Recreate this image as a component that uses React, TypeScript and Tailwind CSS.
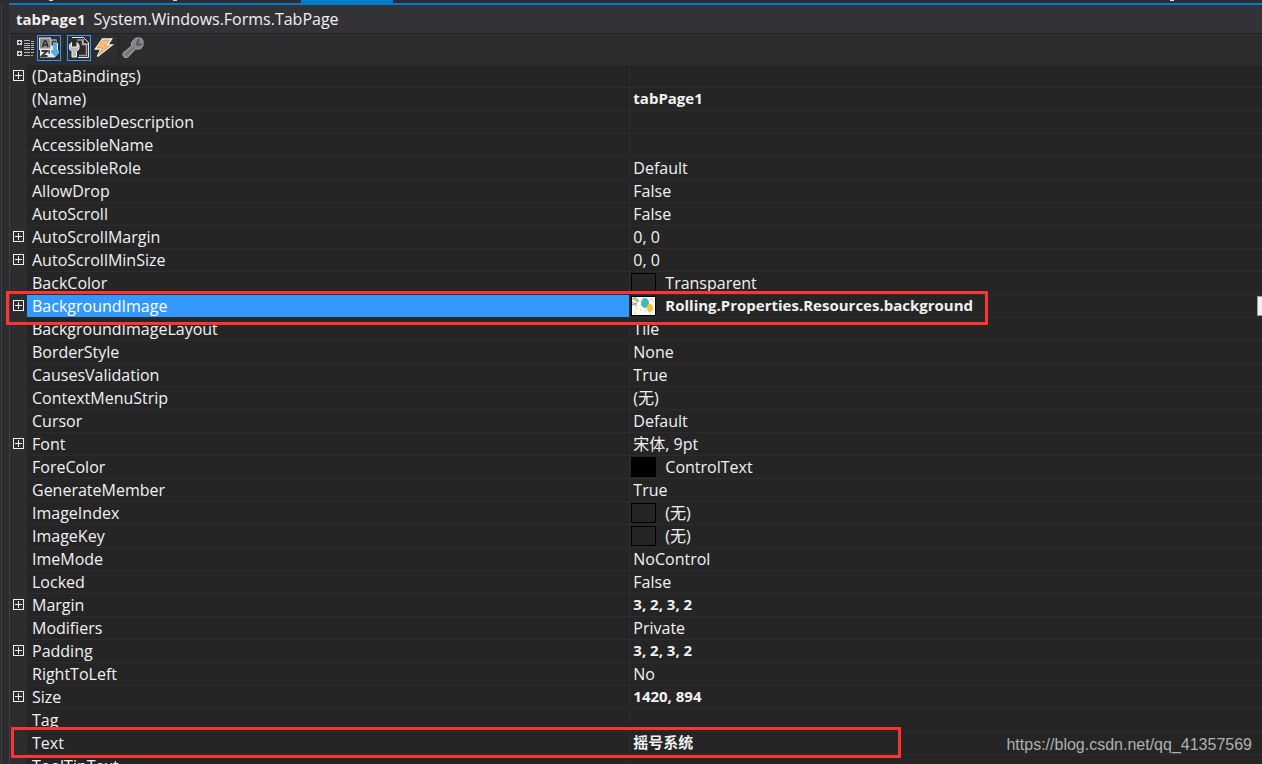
import { useState } from "react";

type Prop = {
  name: string;
  value?: string;
  bold?: boolean;
  expandable?: boolean;
  swatch?: "empty" | "black" | "image";
};

const properties: Prop[] = [
  { name: "(DataBindings)", expandable: true },
  { name: "(Name)", value: "tabPage1", bold: true },
  { name: "AccessibleDescription" },
  { name: "AccessibleName" },
  { name: "AccessibleRole", value: "Default" },
  { name: "AllowDrop", value: "False" },
  { name: "AutoScroll", value: "False" },
  { name: "AutoScrollMargin", value: "0, 0", expandable: true },
  { name: "AutoScrollMinSize", value: "0, 0", expandable: true },
  { name: "BackColor", value: "Transparent", swatch: "empty" },
  { name: "BackgroundImage", value: "Rolling.Properties.Resources.background", bold: true, expandable: true, swatch: "image" },
  { name: "BackgroundImageLayout", value: "Tile" },
  { name: "BorderStyle", value: "None" },
  { name: "CausesValidation", value: "True" },
  { name: "ContextMenuStrip", value: "(无)" },
  { name: "Cursor", value: "Default" },
  { name: "Font", value: "宋体, 9pt", expandable: true },
  { name: "ForeColor", value: "ControlText", swatch: "black" },
  { name: "GenerateMember", value: "True" },
  { name: "ImageIndex", value: "(无)", swatch: "empty" },
  { name: "ImageKey", value: "(无)", swatch: "empty" },
  { name: "ImeMode", value: "NoControl" },
  { name: "Locked", value: "False" },
  { name: "Margin", value: "3, 2, 3, 2", bold: true, expandable: true },
  { name: "Modifiers", value: "Private" },
  { name: "Padding", value: "3, 2, 3, 2", bold: true, expandable: true },
  { name: "RightToLeft", value: "No" },
  { name: "Size", value: "1420, 894", bold: true, expandable: true },
  { name: "Tag" },
  { name: "Text", value: "摇号系统", bold: true },
  { name: "ToolTipText" },
];

function CategoryIcon() {
  return (
    <svg width="24" height="26" shapeRendering="crispEdges">
      <path d="M4 5h5v5h-5zM4 16h5v5h-5z" fill="#d8d8d8" />
      <path d="M6 6h1v3h-1zM5 7h3v1h-3zM6 17h1v3h-1zM5 18h3v1h-3z" fill="#2d2d30" />
      <path d="M11 5h6v1h-6zM11 8h6v1h-6zM11 10h6v1h-6zM11 12h6v1h-6zM11 14h6v1h-6zM11 17h6v1h-6zM11 20h6v1h-6z" fill="#b5b5b5" />
      <path d="M18 6h3v1h-3zM18 8h3v1h-3zM18 10h3v1h-3zM18 12h3v1h-3zM18 14h3v1h-3zM18 17h3v1h-3zM18 20h2v1h-2z" fill="#b5b5b5" />
    </svg>
  );
}

function SortIcon() {
  return (
    <svg width="22" height="24">
      <path d="M1 1.500h12v2h5.500V7h1.500v7.500h1V17l-4.500 4.500H2V14H1z" fill="#e8e8e8" />
      <path d="M2 2.500h10.500v10H2z" fill="#8c8c8c" />
      <path d="M4.500 11L6.500 5h1.500L10 11M5.500 9h3.500" fill="none" stroke="#2b2b2b" strokeWidth="1.500" />
      <path d="M3.500 15h5.500l-5 5h5.500" fill="none" stroke="#3a3a3a" strokeWidth="2" />
      <path d="M13.500 4.500H18v2h-3v3h-1.500zM10.500 14.500h1.500v3h-1.500z" fill="#333337" />
      <path d="M15.500 7h3v7.500h2v2l-3.500 3.500-3.500-3.500v-2h2z" fill="#4db1f2" stroke="#2f8fd4" strokeWidth="0.500" />
    </svg>
  );
}

function PropertiesIcon() {
  return (
    <svg width="22" height="24">
      <path d="M4 1.500h11.500l5 5V21.500H10" fill="#2b2b2b" stroke="#e6e6e6" />
      <path d="M9 4h5.500v4.500h4V19.500H11" fill="none" stroke="#9a9a9a" strokeWidth="1.500" />
      <path d="M15 3v5h5" fill="none" stroke="#cfcfcf" />
      <path d="M3.500 6.500L1.500 9v4l2.500 2.500V21h4.500v-5.500L11 13V9L9 6.500v4.500H7L5.500 11H3.500z" fill="#b8b8b8" stroke="#f0f0f0" />
    </svg>
  );
}

function EventsIcon() {
  return (
    <svg width="24" height="26">
      <path d="M11.500 4h9l-4 6h4.500L6.500 21.500 10 14H4.500z" fill="#f9f4ec" stroke="#f9f4ec" strokeWidth="1.500" />
      <path d="M12 5h6.500l-4.500 6h4.500L8 19.500 11.500 13H6z" fill="#f7bd79" stroke="#c98a4b" strokeWidth="0.700" />
    </svg>
  );
}

function WrenchIcon() {
  return (
    <svg width="24" height="26">
      <path
        d="M13 4.500L15 3h5l2 2.500v5L19.500 14h-5L6.500 22.500h-3L2 20.500V18l8.500-7V7.500z"
        fill="#858585"
        stroke="#a3a3a3"
      />
      <path d="M14.500 7l2.500-3.500h3l-1.500 3 .5 2 3-1v2.500l-3 1.500h-3l-1.500-2z" fill="#5f5f5f" stroke="#929292" strokeWidth="0.700" />
      <path d="M4.500 20L13 12.500" stroke="#727272" strokeWidth="1.500" />
    </svg>
  );
}

function ResourceThumb() {
  return (
    <svg width="23" height="18" className="bg-white">
      <path d="M0 1l6 4M0 5l5 4" stroke="#f0a04b" strokeWidth="1.500" />
      <path d="M2 0l5 4M0 8l5-2" stroke="#5fbcc4" strokeWidth="1.500" />
      <path d="M3 14l3-3M8 9l2-3M2 17l2-2" stroke="#f3d08b" />
      <ellipse cx="13" cy="6" rx="4" ry="5" fill="#45b8b9" />
      <ellipse cx="18" cy="11" rx="3" ry="4" fill="#f8c53a" />
      <path d="M13 11v5M18 15v3" stroke="#c5e3e0" />
      <path d="M18 2h2M20 4h1M8 13h1" stroke="#f1a27b" />
    </svg>
  );
}

function Swatch({ kind }: { kind: "empty" | "black" | "image" }) {
  return (
    <span className={`block h-5 w-[25px] shrink-0 border border-black ${kind === "black" ? "bg-black" : "bg-[#252526]"}`}>
      {kind === "image" && <ResourceThumb />}
    </span>
  );
}

export default function App() {
  const [selected, setSelected] = useState("BackgroundImage");
  const [sorted, setSorted] = useState(true);

  return (
    <div className="relative flex h-screen flex-col overflow-hidden bg-[#2d2d30] font-['Open_Sans','Noto_Sans_CJK_SC',sans-serif] text-[16px] leading-[22px] text-[#f1f1f1]">
      {/* bottom edge of the document tabs */}
      <div className="ml-[9px] flex h-[3px] shrink-0 items-start">
        <div className="flex w-[292px] gap-[120px] pl-10">
          <span className="h-px w-1 bg-[#d0d0d0]" />
          <span className="h-px w-1 bg-[#d0d0d0]" />
        </div>
        <div className="h-full w-[92px] bg-[#007acc]" />
        <div className="flex flex-1 justify-end pr-[88px]">
          <span className="h-px w-1 bg-[#e6e6e6]" />
        </div>
      </div>

      <div className="flex flex-1">
        <div className="flex w-[9px] shrink-0 pl-px">
          <span className="w-px bg-[#3f3f46]" />
        </div>

        <main className="min-w-0 flex-1 border-t-2 border-[#007acc]">
          <header className="flex h-7 items-center gap-2 bg-[#333337] pl-[7px]">
            <h1 className="text-[15px] font-bold">tabPage1</h1>
            <span>System.Windows.Forms.TabPage</span>
          </header>

          <div role="toolbar" className="flex h-8 items-start border-t border-l border-t-[#222224] border-l-[#3f3f46] pt-px pl-[3px]">
            <button aria-label="Categorized" onClick={() => setSorted(false)}>
              <CategoryIcon />
            </button>
            <button
              aria-label="Alphabetical"
              onClick={() => setSorted(true)}
              className={`border ${sorted ? "border-[#3399ff]" : "border-transparent"}`}
            >
              <SortIcon />
            </button>
            <span className="ml-[3px] mr-0.5 h-[26px] w-px bg-[#222224]" />
            <button aria-label="Properties" className="border border-[#3399ff]">
              <PropertiesIcon />
            </button>
            <button aria-label="Events">
              <EventsIcon />
            </button>
            <span className="ml-[3px] mr-0.5 h-[26px] w-px bg-[#222224]" />
            <button aria-label="Property Pages">
              <WrenchIcon />
            </button>
          </div>

          <table className="w-full table-fixed border-collapse bg-[#252526]">
            <colgroup>
              <col className="w-[18px]" />
              <col className="w-[48.15%]" />
              <col />
            </colgroup>
            <tbody>
              {properties.map((p) => {
                const active = p.name === selected;
                return (
                  <tr key={p.name} className="h-[23px]" onClick={() => setSelected(p.name)}>
                    <td className="bg-[#2d2d30] p-0">
                      <div className="flex h-[23px] border-l border-[#3f3f46] pt-[5px] pl-[3px]">
                        {p.expandable && (
                          <button aria-label={`Expand ${p.name}`} className="size-[11px]">
                            <svg width="11" height="11" shapeRendering="crispEdges">
                              <path d="M0 0h11v11H0zM1 1v9h9V1z" fill="#f1f1f1" fillRule="evenodd" />
                              <path d="M5 2h1v7H5zM2 5h7v1H2z" fill="#f1f1f1" />
                            </svg>
                          </button>
                        )}
                      </div>
                    </td>
                    <td className="p-0">
                      <div className="flex h-[23px] border-r border-b border-[#2d2d30]">
                        <span className={`flex-1 truncate pl-[5px] ${active ? "bg-[#3399ff] text-white" : ""}`}>{p.name}</span>
                      </div>
                    </td>
                    <td className="p-0">
                      <div className="flex h-[23px] border-b border-[#2d2d30]">
                        <div className={`flex flex-1 items-start ${p.swatch ? "gap-[9px] pl-px" : "pl-[3px]"}`}>
                          {p.swatch && (
                            <div className="pt-px">
                              <Swatch kind={p.swatch} />
                            </div>
                          )}
                          <span className={p.bold ? "truncate text-[15px] leading-5 font-bold" : "truncate"}>{p.value}</span>
                        </div>
                        {active && (
                          <button aria-label="Edit value" className="mt-px h-5 w-[5px] border border-r-0 border-[#9a9a9a] bg-[#f0f0f0]" />
                        )}
                      </div>
                    </td>
                  </tr>
                );
              })}
            </tbody>
          </table>
        </main>
      </div>

      {/* callouts drawn over the grid */}
      <div className="pointer-events-none absolute top-[291px] left-1.5 h-[34px] w-[982px] border-3 border-[#fc3434]" />
      <div className="pointer-events-none absolute top-[727px] left-[11px] h-[31px] w-[890px] border-3 border-[#fc3434]" />
      <a
        href="https://blog.csdn.net/qq_41357569"
        className="absolute top-[734px] right-2.5 font-['Liberation_Sans',sans-serif] text-[16px] text-[#b0b0b0]"
      >
        https://blog.csdn.net/qq_41357569
      </a>
    </div>
  );
}
